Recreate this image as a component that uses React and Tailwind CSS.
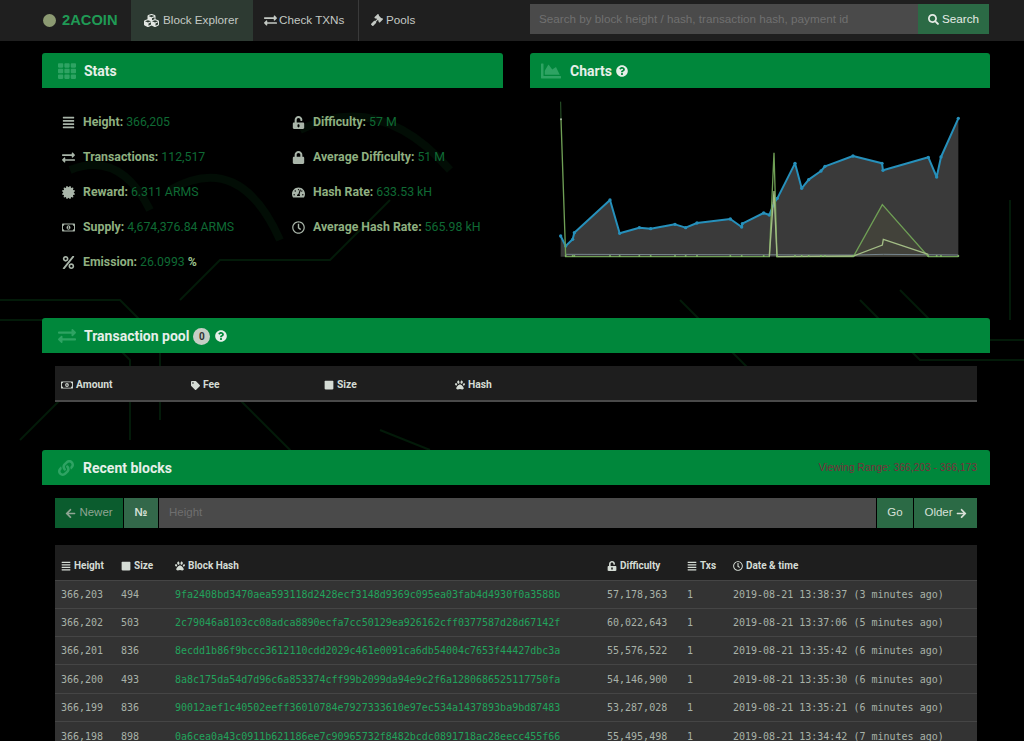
import {
  FaCubes, FaExchangeAlt, FaGavel, FaSearch, FaTachometerAlt, FaAlignJustify, FaCertificate,
  FaRegMoneyBillAlt, FaPercent, FaUnlockAlt, FaLock, FaRegClock, FaChartArea, FaQuestionCircle, FaLink,
  FaTag, FaSquare, FaPaw, FaArrowLeft, FaArrowRight, FaTh,
} from 'react-icons/fa';

const LEFT_STATS = [
  { icon: FaAlignJustify, label: 'Height:', value: '366,205' },
  { icon: FaExchangeAlt, label: 'Transactions:', value: '112,517' },
  { icon: FaCertificate, label: 'Reward:', value: '6.311 ARMS' },
  { icon: FaRegMoneyBillAlt, label: 'Supply:', value: '4,674,376.84 ARMS' },
  { icon: FaPercent, label: 'Emission:', value: '26.0993', suffix: '%' },
];

const RIGHT_STATS = [
  { icon: FaUnlockAlt, label: 'Difficulty:', value: '57 M' },
  { icon: FaLock, label: 'Average Difficulty:', value: '51 M' },
  { icon: FaTachometerAlt, label: 'Hash Rate:', value: '633.53 kH' },
  { icon: FaRegClock, label: 'Average Hash Rate:', value: '565.98 kH' },
];

const BLOCKS = [
  ['366,203', '494', '9fa2408bd3470aea593118d2428ecf3148d9369c095ea03fab4d4930f0a3588b', '57,178,363', '1', '2019-08-21 13:38:37 (3 minutes ago)'],
  ['366,202', '503', '2c79046a8103cc08adca8890ecfa7cc50129ea926162cff0377587d28d67142f', '60,022,643', '1', '2019-08-21 13:37:06 (5 minutes ago)'],
  ['366,201', '836', '8ecdd1b86f9bccc3612110cdd2029c461e0091ca6db54004c7653f44427dbc3a', '55,576,522', '1', '2019-08-21 13:35:42 (6 minutes ago)'],
  ['366,200', '493', '8a8c175da54d7d96c6a853374cff99b2099da94e9c2f6a1280686525117750fa', '54,146,900', '1', '2019-08-21 13:35:30 (6 minutes ago)'],
  ['366,199', '836', '90012aef1c40502eeff36010784e7927333610e97ec534a1437893ba9bd87483', '53,287,028', '1', '2019-08-21 13:35:21 (6 minutes ago)'],
  ['366,198', '898', '0a6cea0a43c0911b621186ee7c90965732f8482bcdc0891718ac28eecc455f66', '55,495,498', '1', '2019-08-21 13:34:42 (7 minutes ago)'],
];

const BLUE_POINTS = [
  [62, 435], [77, 465], [98, 445], [103, 425], [210, 327], [239, 427], [298, 410], [332, 413], [405, 400],
  [437, 410], [471, 396], [571, 384], [605, 408], [607, 398], [671, 366], [688, 372], [703, 335], [712, 322],
  [765, 217], [785, 292], [806, 266], [843, 240], [855, 226], [939, 195], [1026, 217], [1029, 238],
  [1165, 199], [1190, 258], [1203, 198], [1255, 82],
];

const toPath = (pts) => pts.map((p) => p.join(',')).join(' ');

const Stat = ({ stat }) => {
  const Icon = stat.icon;
  return (
    <div className="flex items-center h-[35px]">
      <span className="w-[21px] shrink-0 text-[#a9b5a9]"><Icon size={13} /></span>
      <span className="font-bold text-[#8fb080]">{stat.label}</span>
      <span className="ml-[3px] text-[#0f6a34]">{stat.value}</span>
      {stat.suffix && <span className="ml-[3px] font-bold text-[#9cc08c]">{stat.suffix}</span>}
    </div>
  );
};

const PanelHeading = ({ icon: Icon, iconSize = 18, gap = 'mr-[8px]', tight, children, right }) => (
  <div className={`h-[35px] flex items-center rounded-t-[3px] bg-[#00873b] pr-[13px] font-['Roboto',sans-serif] text-[14px] font-bold text-[#e6efe9] ${tight ? 'pl-[11px]' : 'pl-[16px]'}`}>
    <Icon size={iconSize} className={`shrink-0 text-[#2ea363] ${gap}`} />
    <span className="pt-px">{children}</span>
    {right}
  </div>
);

const Chart = () => (
  <svg viewBox="0 0 1320 540" className="block w-[440px] h-[180px]">
    <polygon points={`62,497 ${toPath(BLUE_POINTS)} 1255,497`} fill="#3a3a3a" />
    <polygon points="940,497 1027,341 1165,497" fill="#42423a" />
    <polyline points="77,490 940,492 1030,490 1255,492" fill="none" stroke="#76858e" strokeWidth="3" />
    <polyline points={toPath(BLUE_POINTS)} fill="none" stroke="#2690bb" strokeWidth="6" strokeLinejoin="round" />
    {BLUE_POINTS.map((p) => <circle key={p[0]} cx={p[0]} cy={p[1]} r="5" fill="#2690bb" />)}
    <line x1="62" y1="32" x2="63" y2="85" stroke="#2c5a2c" strokeWidth="3" />
    <polyline
      points="63,85 77,497 688,497 702,185 711,497 940,497 1027,341 1165,497 1255,497"
      fill="none"
      stroke="#6f9f55"
      strokeWidth="4"
    />
    <polyline points="688,497 702,300 711,497 940,495 1027,462 1030,445 1165,490" fill="none" stroke="#a3bd85" strokeWidth="4" />
    {[77, 98, 103, 210, 239, 298, 332, 405, 437, 471, 571, 605, 671, 711, 765, 785, 806, 843, 855, 940, 1165, 1190, 1203, 1255].map((x) => (
      <circle key={x} cx={x} cy="495" r="3" fill="#82b868" />
    ))}
    <circle cx="63" cy="85" r="3" fill="#a9b8a0" />
  </svg>
);

const TableHead = ({ icon: Icon, children }) => (
  <th className="text-left font-bold pl-[6px] pt-[8px]">
    <span className="inline-flex items-center gap-[3px]"><Icon size={10} />{children}</span>
  </th>
);

export default function App() {
  return (
    <div className="relative h-[741px] overflow-hidden bg-black font-['Liberation_Sans',sans-serif]">
      {/* circuit board backdrop */}
      <svg className="absolute inset-0 w-full h-full" viewBox="0 0 1024 741" fill="none" stroke="#031a09" strokeWidth="2">
        <path d="M0 300 H120 L160 340 V420 M0 320 H90 L130 360 V440 M20 440 L60 400 H110 M180 300 L220 260 H330 L390 200 M240 400 L290 450 V480" />
        <path d="M860 300 L920 360 H1024 M900 290 L950 340 H1024 M1010 200 V320 M380 430 L430 450 M680 300 L760 380" />
        <path d="M170 190 Q240 150 280 240 M70 170 Q120 150 150 210 M300 130 Q380 90 450 170" stroke="#020d05" strokeWidth="8" />
      </svg>

      <div className="relative">
        {/* Navbar */}
        <nav className="h-[41px] flex bg-[#1f1f1f] text-[11.7px] text-[#c4c9c4]">
          <div className="w-[131px] flex items-center pl-[43px]">
            <span className="w-[13px] h-[13px] rounded-full bg-[#8c9a72]" />
            <span className="ml-[6px] text-[14.7px] font-bold text-[#1f9a55]">2ACOIN</span>
          </div>
          <a className="w-[122px] flex items-center gap-[4px] pl-[13px] pb-px bg-[#2d3a32]">
            <FaCubes size={15} className="text-[#e3e7e3]" />Block Explorer
          </a>
          <a className="w-[106px] flex items-center gap-[2px] pl-[11px] pb-px border-r border-[#3a3a3a]">
            <FaExchangeAlt size={13} />Check TXNs
          </a>
          <a className="w-[100px] flex items-center gap-[3px] pl-[12px] pb-px">
            <FaGavel size={12} />Pools
          </a>
          <form className="ml-auto mr-[35px] pt-[4px] flex items-start">
            <div className="w-[388px] h-[30px] flex items-center pl-[9px] bg-[#4a4a4a] text-[#707070]">
              Search by block height / hash, transaction hash, payment id
            </div>
            <button className="w-[71px] h-[30px] flex items-center justify-center gap-[3px] bg-[#2b6a45] text-[#e6ebe6]">
              <FaSearch size={11} />Search
            </button>
          </form>
        </nav>

        <main className="pt-[12px] pl-[42px] pr-[34px]">
          {/* Stats + Charts */}
          <div className="grid grid-cols-[461px_460px] gap-x-[27px] h-[265px]">
            <section>
              <PanelHeading icon={FaTh}>Stats</PanelHeading>
              <div className="grid grid-cols-[230px_1fr] pt-[17px] pl-[20px] font-['Roboto',sans-serif] text-[12.3px]">
                <div>{LEFT_STATS.map((s) => <Stat key={s.label} stat={s} />)}</div>
                <div>{RIGHT_STATS.map((s) => <Stat key={s.label} stat={s} />)}</div>
              </div>
            </section>
            <section>
              <PanelHeading icon={FaChartArea} iconSize={20} gap="mr-[9px]" tight right={<FaQuestionCircle size={12} className="ml-[4px]" />}>Charts</PanelHeading>
              <div className="pt-[3px] pl-[10px]"><Chart /></div>
            </section>
          </div>

          {/* Transaction pool */}
          <section className="h-[132px]">
            <PanelHeading icon={FaExchangeAlt}>
              <span className="flex items-center">
                Transaction pool
                <span className="ml-[4px] w-[17px] h-[17px] rounded-full bg-[#c6cec6] text-[#333] text-[10px] flex items-center justify-center">0</span>
                <FaQuestionCircle size={12} className="ml-[5px]" />
              </span>
            </PanelHeading>
            <div className="mt-[13px] mx-[13px] h-[36px] pt-[4px] grid grid-cols-[130px_133px_131px_1fr] items-center pl-[6px] bg-[#1e1e1e] border-b-2 border-[#4a4a4a] font-['Roboto',sans-serif] text-[10.3px] font-bold text-[#d5dcd5]">
              <span className="flex items-center gap-[3px]"><FaRegMoneyBillAlt size={12} />Amount</span>
              <span className="flex items-center gap-[3px]"><FaTag size={9} />Fee</span>
              <span className="flex items-center gap-[3px]"><FaSquare size={10} />Size</span>
              <span className="flex items-center gap-[3px]"><FaPaw size={10} />Hash</span>
            </div>
          </section>

          {/* Recent blocks */}
          <section>
            <PanelHeading
              icon={FaLink}
              iconSize={16}
              gap="mr-[9px]"
              right={<span className="ml-auto font-['Liberation_Sans',sans-serif] text-[10.3px] font-normal text-[#7a2f3c]">Viewing Range: 366,203 - 366,173</span>}
            >
              Recent blocks
            </PanelHeading>
            <div className="mx-[13px] mt-[13px] h-[30px] flex text-[11.5px]">
              <button className="w-[68px] flex items-center justify-center gap-[3px] bg-[#0b5c2e] text-[#8fa594]">
                <FaArrowLeft size={11} />Newer
              </button>
              <span className="ml-px w-[34px] flex items-center justify-center bg-[#33684a] font-bold text-[#d8e0d8]">№</span>
              <div className="ml-px flex-1 flex items-center pl-[10px] bg-[#4a4a4a] text-[#6f6f6f]">Height</div>
              <button className="ml-px w-[36px] flex items-center justify-center bg-[#2b6a45] text-[#d8e0d8]">Go</button>
              <button className="ml-px w-[63px] flex items-center justify-center gap-[3px] bg-[#2b6a45] text-[#d8e0d8]">
                Older<FaArrowRight size={11} />
              </button>
            </div>
            <table className="mx-[13px] mt-[17px] w-[922px] table-fixed">
              <colgroup>
                <col className="w-[60px]" />
                <col className="w-[54px]" />
                <col className="w-[432px]" />
                <col className="w-[80px]" />
                <col className="w-[46px]" />
                <col />
              </colgroup>
              <thead>
                <tr className="h-[35px] bg-[#1e1e1e] font-['Roboto',sans-serif] text-[10px] text-[#d5dcd5]">
                  <TableHead icon={FaAlignJustify}>Height</TableHead>
                  <TableHead icon={FaSquare}>Size</TableHead>
                  <TableHead icon={FaPaw}>Block Hash</TableHead>
                  <TableHead icon={FaUnlockAlt}>Difficulty</TableHead>
                  <TableHead icon={FaAlignJustify}>Txs</TableHead>
                  <TableHead icon={FaRegClock}>Date &amp; time</TableHead>
                </tr>
              </thead>
              <tbody className="font-['DejaVu_Sans_Mono',monospace] text-[10px] text-[#a8b2a8]">
                {BLOCKS.map((b) => (
                  <tr key={b[0]} className="h-[28.33px] bg-[#333333] border-t border-[#454545]">
                    <td className="pl-[6px]">{b[0]}</td>
                    <td className="pl-[6px]">{b[1]}</td>
                    <td className="pl-[6px] text-[#22a35c]">{b[2]}</td>
                    <td className="pl-[6px]">{b[3]}</td>
                    <td className="pl-[6px]">{b[4]}</td>
                    <td className="pl-[6px] whitespace-nowrap">{b[5]}</td>
                  </tr>
                ))}
              </tbody>
            </table>
          </section>
        </main>
      </div>
    </div>
  );
}
